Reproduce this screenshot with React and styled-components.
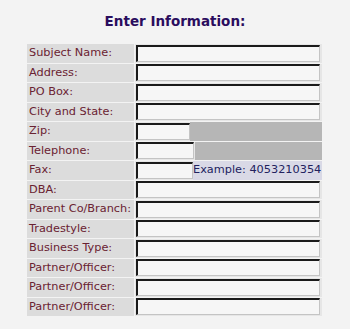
import React from 'react';
import styled, { createGlobalStyle } from 'styled-components';

const GlobalStyle = createGlobalStyle`
  html, body {
    margin: 0;
    padding: 0;
    background: #f3f3f3;
  }
`;

const Page = styled.div`
  width: 350px;
  height: 329px;
  padding-top: 13px;
  box-sizing: border-box;
  font-family: 'DejaVu Sans', Verdana, sans-serif;
`;

const Title = styled.h1`
  margin: 0 0 15px 0;
  text-align: center;
  font-size: 13.5px;
  line-height: 16px;
  font-weight: bold;
  color: #2a0d5e;
`;

const Form = styled.div`
  margin-left: 27px;
  width: 295px;
  display: grid;
  grid-template-columns: 107px 1fr;
  column-gap: 1px;
  row-gap: 1px;
  background: #f3f3f3;
`;

const Label = styled.div`
  height: 18.5px;
  background: #dcdcdc;
  color: #6a2232;
  font-size: 11.3px;
  line-height: 18.5px;
  padding-left: 2px;
  white-space: nowrap;
`;

const Cell = styled.div`
  height: 18.5px;
  background: #e6e6e6;
  display: flex;
  align-items: center;
  padding-left: 1px;
`;

const Input = styled.div`
  box-sizing: border-box;
  width: ${(p) => p.$width || '184px'};
  height: 17px;
  background: #f6f6f6;
  border-top: 2px solid #1a1a1a;
  border-left: 2px solid #1a1a1a;
  border-right: 1px solid #c4c4c4;
  border-bottom: 1px solid #c4c4c4;
  flex-shrink: 0;
`;

const GreyBlock = styled.div`
  flex: 1;
  align-self: stretch;
  margin-left: ${(p) => p.$gap || '0px'};
  background: #b6b6b6;
`;

const Hint = styled.div`
  flex: 1;
  align-self: stretch;
  background: #d9d9e6;
  color: #22225e;
  font-size: 11.3px;
  line-height: 18.5px;
  white-space: nowrap;
  overflow: hidden;
`;

const rows = [
  { label: 'Subject Name:' },
  { label: 'Address:' },
  { label: 'PO Box:' },
  { label: 'City and State:' },
  { label: 'Zip:', width: '54px', extra: 'grey' },
  { label: 'Telephone:', width: '58px', extra: 'grey', gap: '1px' },
  { label: 'Fax:', width: '57px', extra: 'hint' },
  { label: 'DBA:' },
  { label: 'Parent Co/Branch:' },
  { label: 'Tradestyle:' },
  { label: 'Business Type:' },
  { label: 'Partner/Officer:' },
  { label: 'Partner/Officer:' },
  { label: 'Partner/Officer:' },
];

export default function App() {
  return (
    <Page>
      <GlobalStyle />
      <Title>Enter Information:</Title>
      <Form>
        {rows.map((row, i) => (
          <React.Fragment key={i}>
            <Label>{row.label}</Label>
            <Cell>
              <Input $width={row.width} />
              {row.extra === 'grey' && <GreyBlock $gap={row.gap} />}
              {row.extra === 'hint' && <Hint>Example: 4053210354</Hint>}
            </Cell>
          </React.Fragment>
        ))}
      </Form>
    </Page>
  );
}
